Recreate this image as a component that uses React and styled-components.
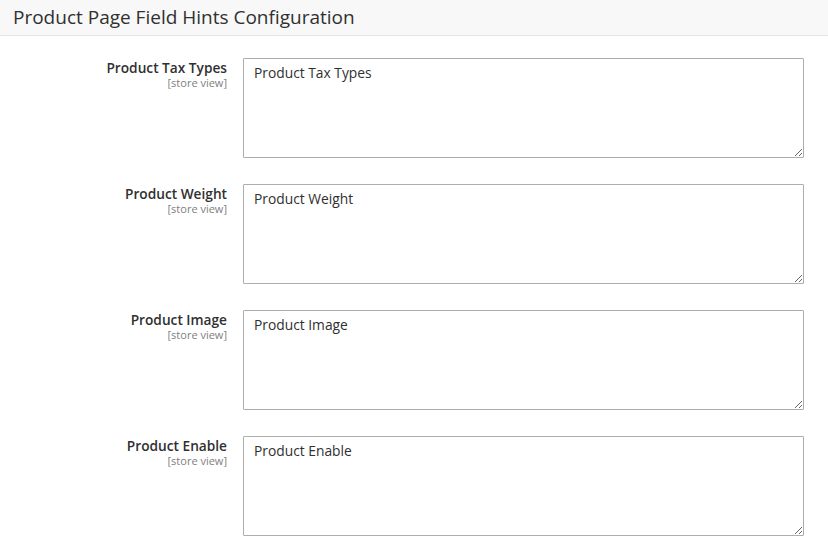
import React from 'react';
import styled, { createGlobalStyle } from 'styled-components';

const GlobalStyle = createGlobalStyle`
  html, body {
    margin: 0;
    padding: 0;
    background: #fff;
    font-family: "Open Sans", "Noto Sans", sans-serif;
    color: #303030;
  }
`;

const Section = styled.div`
  width: 828px;
`;

const Header = styled.div`
  height: 36px;
  box-sizing: border-box;
  background: #f8f8f8;
  border-bottom: 1px solid #e3e3e3;
  padding: 0 13px;
  display: flex;
  align-items: center;
`;

const Title = styled.h2`
  margin: 0;
  font-size: 19px;
  font-weight: 400;
  color: #303030;
  line-height: 1;
  padding-bottom: 1px;
`;

const Fields = styled.div`
  display: flex;
  flex-direction: column;
  gap: 26px;
  padding: 22px 24px 14px 0;
`;

const Row = styled.div`
  display: grid;
  grid-template-columns: 227px 561px;
  column-gap: 16px;
`;

const LabelCell = styled.div`
  display: flex;
  flex-direction: column;
  align-items: flex-end;
  padding-top: 1px;
`;

const Label = styled.label`
  font-size: 13.7px;
  font-weight: 600;
  line-height: 18px;
  color: #303030;
`;

const Scope = styled.span`
  font-size: 11px;
  line-height: 12px;
  color: #808080;
`;

const Area = styled.textarea`
  box-sizing: border-box;
  width: 561px;
  height: 100px;
  margin: 0;
  border: 1px solid #adadad;
  border-radius: 1px;
  padding: 4px 10px;
  font-family: "Open Sans", "Noto Sans", sans-serif;
  font-size: 13.8px;
  line-height: 19px;
  color: #303030;
  background: #fff;
  resize: vertical;
  outline: none;
`;

const fields = [
  'Product Tax Types',
  'Product Weight',
  'Product Image',
  'Product Enable',
];

export default function App() {
  return (
    <>
      <GlobalStyle />
      <Section>
        <Header>
          <Title>Product Page Field Hints Configuration</Title>
        </Header>
        <Fields>
          {fields.map((name) => (
            <Row key={name}>
              <LabelCell>
                <Label>{name}</Label>
                <Scope>[store view]</Scope>
              </LabelCell>
              <Area defaultValue={name} />
            </Row>
          ))}
        </Fields>
      </Section>
    </>
  );
}
